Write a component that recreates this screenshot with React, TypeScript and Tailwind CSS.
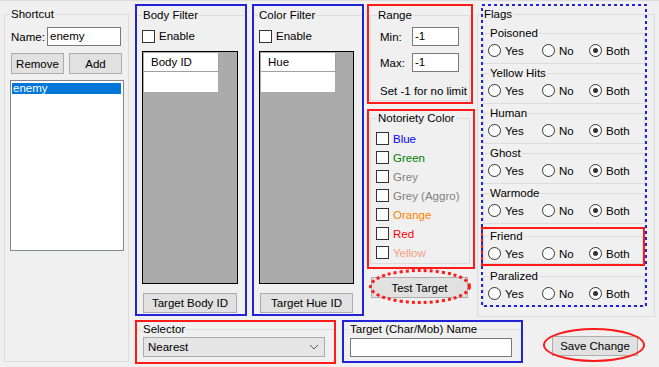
import React from "react"

const flags = ["Poisoned", "Yellow Hits", "Human", "Ghost", "Warmode"]

const notoriety = [
  { label: "Blue", color: "text-[#0000ff]" },
  { label: "Green", color: "text-[#008000]" },
  { label: "Grey", color: "text-[#808080]" },
  { label: "Grey (Aggro)", color: "text-[#808080]" },
  { label: "Orange", color: "text-[#ff8000]" },
  { label: "Red", color: "text-[#ff0000]" },
  { label: "Yellow", color: "text-[#f0a080]" },
]

function CheckBox() {
  return <span className="inline-block h-[13px] w-[13px] shrink-0 border border-[#333] bg-white" />
}

function Radio({ label, checked, className = "" }: { label: string; checked?: boolean; className?: string }) {
  return (
    <span className={"flex items-center gap-[4px] " + className}>
      <span className="flex h-[13px] w-[13px] shrink-0 items-center justify-center rounded-full border border-[#333] bg-white">
        {checked && <span className="h-[5px] w-[5px] rounded-full bg-[#333]" />}
      </span>
      {label}
    </span>
  )
}

function FlagGroup({ title, className = "" }: { title: string; className?: string }) {
  return (
    <fieldset className={"border border-[#dcdcdc] " + className}>
      <legend className="ml-[5px] px-[1px] leading-[14px]">{title}</legend>
      <div className="mt-[3px] flex h-[15px] items-center pl-[4px]">
        <Radio label="Yes" className="w-[54px]" />
        <Radio label="No" className="w-[47px]" />
        <Radio label="Both" checked />
      </div>
    </fieldset>
  )
}

function Button({ children, className = "" }: { children: React.ReactNode; className?: string }) {
  return (
    <button className={"flex items-center justify-center border border-[#adadad] bg-[#e1e1e1] leading-[14px] " + className}>
      {children}
    </button>
  )
}

function IdGrid({ header, className = "" }: { header: string; className?: string }) {
  return (
    <div className={"h-[233px] border border-black bg-[#ababab] p-[1px] " + className}>
      <div className="h-[19px] w-[75px] border-b border-r border-[#a0a0a0] bg-white pl-[7px] leading-[18px]">{header}</div>
      <div className="h-[20px] w-[74px] bg-white" />
    </div>
  )
}

function FilterBox({ title, header, button, wide }: { title: string; header: string; button: string; wide?: boolean }) {
  return (
    <div className="h-[312px] w-[112px] border-2 border-[#2222d6]">
      <fieldset className="mt-[2px] border-t border-[#dcdcdc]">
        <legend className={(wide ? "ml-[5px]" : "ml-[4px]") + " px-[1px] leading-[14px]"}>{title}</legend>
        <label className="mt-[7px] flex h-[14px] items-center gap-[4px] pl-[5px]">
          <CheckBox />
          Enable
        </label>
        <IdGrid header={header} className={"ml-[5px] mt-[8px] " + (wide ? "w-[96px]" : "w-[95px]")} />
        <Button className={"mt-[9px] h-[20px] " + (wide ? "ml-[6px] w-[94px]" : "ml-[6px] w-[93px]")}>{button}</Button>
      </fieldset>
    </div>
  )
}

export default function App() {
  return (
    <div className="flex h-[367px] w-[659px] overflow-hidden border-t border-[#dcdcdc] bg-[#f0f0f0] font-['Liberation_Sans',Arial,sans-serif] text-[11.5px] leading-[14px] text-black">
      {/* Shortcut */}
      <fieldset className="ml-[4px] mt-[6px] h-[355px] w-[125px] shrink-0 border border-[#dcdcdc]">
        <legend className="ml-[5px] px-[1px] leading-[14px]">Shortcut</legend>
        <div className="mt-[6px] flex items-center pl-[6px]">
          <span className="w-[36px]">Name:</span>
          <div className="h-[19px] w-[74px] border border-[#7a7a7a] bg-white pl-[2px] leading-[17px]">enemy</div>
        </div>
        <div className="mt-[7px] flex gap-[5px] pl-[6px]">
          <Button className="h-[21px] w-[53px]">Remove</Button>
          <Button className="h-[21px] w-[53px]">Add</Button>
        </div>
        <div className="ml-[5px] mt-[6px] h-[171px] w-[114px] border border-[#828790] bg-white p-[1px]">
          <div className="mt-[1px] h-[11px] w-[109px] bg-[#0078d7] pl-[1px] leading-[11px] text-white">enemy</div>
        </div>
      </fieldset>

      <div className="ml-[6px] mt-[3px] flex flex-col">
        <div className="flex h-[313px] items-start">
          <FilterBox title="Body Filter" header="Body ID" button="Target Body ID" wide />
          <div className="ml-[5px]">
            <FilterBox title="Color Filter" header="Hue" button="Target Hue ID" />
          </div>

          {/* Range / Notoriety */}
          <div className="ml-[3px] flex w-[108px] flex-col">
            <div className="h-[100px] w-[106px] overflow-hidden border-2 border-[#ff1a1a]">
              <fieldset className="ml-[1px] mt-[2px] h-[93px] w-[100px] border border-[#dcdcdc]">
                <legend className="ml-[6px] px-[1px] leading-[14px]">Range</legend>
                <div className="mt-[5px] flex items-center pl-[9px]">
                  <span className="w-[32px]">Min:</span>
                  <div className="h-[19px] w-[47px] border border-[#7a7a7a] bg-white pl-[2px] leading-[17px]">-1</div>
                </div>
                <div className="mt-[7px] flex items-center pl-[9px]">
                  <span className="w-[32px]">Max:</span>
                  <div className="h-[19px] w-[47px] border border-[#7a7a7a] bg-white pl-[2px] leading-[17px]">-1</div>
                </div>
                <div className="mt-[12px] whitespace-nowrap pl-[9px]">Set -1 for no limit</div>
              </fieldset>
            </div>

            <div className="mt-[5px] h-[160px] w-[108px] border-2 border-[#ff1a1a]">
              <fieldset className="ml-[1px] h-[153px] w-[100px] border border-[#dcdcdc]">
                <legend className="ml-[6px] px-[1px] leading-[14px]">Notoriety Color</legend>
                <div className="mt-[4px] flex flex-col pl-[5px]">
                  {notoriety.map((n) => (
                    <label key={n.label} className="flex h-[19px] items-center gap-[4px]">
                      <CheckBox />
                      <span className={n.color}>{n.label}</span>
                    </label>
                  ))}
                </div>
              </fieldset>
            </div>

            <div className="relative ml-[4px] mt-[8px] w-[97px]">
              <Button className="h-[21px] w-[97px]">Test Target</Button>
              <svg className="pointer-events-none absolute left-[-2px] top-[-8px]" width="102" height="35" viewBox="0 0 102 35">
                <ellipse cx="51" cy="17.5" rx="49.5" ry="16" fill="none" stroke="#ff1a1a" strokeWidth="3" strokeDasharray="3 3" />
              </svg>
            </div>
          </div>

          {/* Flags */}
          <div className="relative ml-[2px] w-[178px]">
            <fieldset className="mt-[3px] h-[310px] border border-[#dcdcdc]">
              <legend className="ml-[5px] px-[1px] leading-[14px]">Flags</legend>
              <div className="ml-[5px] mt-[5px] flex w-[162px] flex-col">
                {flags.map((f, i) => (
                  <FlagGroup key={f} title={f} className={"h-[38px] " + (i === 0 ? "" : "mt-[2px]")} />
                ))}
                <div className="-ml-[2px] mt-[3px] h-[39px] w-[164px] border-2 border-[#ff1a1a]">
                  <FlagGroup title="Friend" className="h-[35px]" />
                </div>
                <FlagGroup title="Paralized" className="mt-[3px] h-[38px]" />
              </div>
            </fieldset>
            <svg className="pointer-events-none absolute left-[4px] top-0" width="166" height="303" viewBox="0 0 166 303">
              <rect x="1" y="1" width="164" height="301" fill="none" stroke="#2222d6" strokeWidth="2" strokeDasharray="3 3" />
            </svg>
          </div>
        </div>

        {/* bottom row */}
        <div className="mt-[3px] flex items-start">
          <div className="h-[44px] w-[201px] border-2 border-[#ff1a1a]">
            <fieldset className="border-t border-[#dcdcdc]">
              <legend className="ml-[5px] px-[1px] leading-[14px]">Selector</legend>
              <div className="ml-[6px] mt-[1px] flex h-[20px] w-[182px] items-center justify-between border border-[#acacac] bg-[#e5e5e5] pl-[4px] pr-[5px]">
                <span>Nearest</span>
                <svg width="10" height="6" viewBox="0 0 10 6">
                  <polyline points="1,1 5,5 9,1" fill="none" stroke="#606060" strokeWidth="1" />
                </svg>
              </div>
            </fieldset>
          </div>

          <div className="ml-[6px] h-[43px] w-[181px] border-2 border-[#2222d6]">
            <fieldset className="border-t border-[#dcdcdc]">
              <legend className="ml-[5px] px-[1px] leading-[14px]">Target (Char/Mob) Name</legend>
              <div className="ml-[6px] mt-[2px] h-[19px] w-[162px] border border-[#7a7a7a] bg-white" />
            </fieldset>
          </div>

          <div className="relative ml-[29px] mt-[16px]">
            <Button className="h-[20px] w-[86px]">Save Change</Button>
            <div className="pointer-events-none absolute left-[-9px] top-[-8px] h-[34px] w-[102px] rounded-[50%] border-2 border-[#ff1a1a]" />
          </div>
        </div>
      </div>
    </div>
  )
}
